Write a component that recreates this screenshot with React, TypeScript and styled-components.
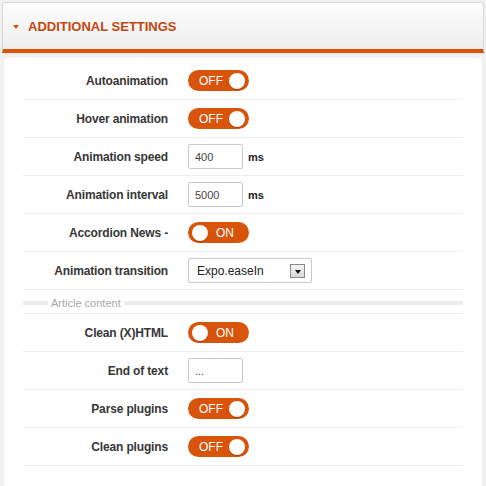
import React from "react";
import styled, { createGlobalStyle } from "styled-components";

const Global = createGlobalStyle`
  html, body { margin: 0; padding: 0; }
  body {
    background: #f1f1f1;
    font-family: "Liberation Sans", Arial, sans-serif;
    color: #333;
  }
`;

const ORANGE = "#d9540b";

const Page = styled.div`
  width: 486px;
  height: 486px;
  padding: 2px 2px 0 2px;
  box-sizing: border-box;
  display: flex;
  flex-direction: column;
  overflow: hidden;
`;

const Header = styled.div`
  height: 46px;
  border: 1px solid #d8d8d8;
  border-bottom: 4px solid ${ORANGE};
  border-radius: 3px 3px 0 0;
  background: linear-gradient(#fdfdfd, #eeeeee);
  display: flex;
  align-items: center;
  padding-left: 10px;
  gap: 9px;
  box-shadow: 0 1px 1px rgba(0, 0, 0, 0.06);
`;

const Caret = styled.span`
  width: 0;
  height: 0;
  border-left: 3.5px solid transparent;
  border-right: 3.5px solid transparent;
  border-top: 4px solid ${ORANGE};
  margin-top: 1px;
`;

const Title = styled.h3`
  margin: 0;
  font-size: 13px;
  font-weight: bold;
  color: #c4470f;
  text-transform: uppercase;
  letter-spacing: 0;
`;

const Panel = styled.div`
  margin: 5px 2px 0 2px;
  flex: 1;
  background: #fff;
  border-radius: 4px 4px 0 0;
  padding: 4px 19px 0 19px;
`;

const Row = styled.div`
  height: 37px;
  border-bottom: 1px solid #ececec;
  display: grid;
  grid-template-columns: 145px auto;
  column-gap: 20px;
  align-items: center;
`;

const Label = styled.label`
  text-align: right;
  font-size: 12px;
  font-weight: bold;
  color: #363636;
  letter-spacing: -0.15px;
`;

const Control = styled.div`
  display: flex;
  align-items: center;
  gap: 5px;
`;

const Toggle = styled.div<{ $on: boolean }>`
  width: 61px;
  height: 21px;
  border-radius: 11px;
  background: ${ORANGE};
  display: flex;
  align-items: center;
  flex-direction: ${(p) => (p.$on ? "row" : "row-reverse")};
  justify-content: space-between;
  padding: 0 ${(p) => (p.$on ? "15px" : "4px")} 0 ${(p) => (p.$on ? "4px" : "11px")};
  box-sizing: border-box;
`;

const Knob = styled.span`
  width: 16px;
  height: 16px;
  border-radius: 50%;
  background: radial-gradient(circle at 40% 35%, #ffffff 55%, #e2e2e2 100%);
  box-shadow: 0 1px 1px rgba(0, 0, 0, 0.25);
`;

const ToggleText = styled.span`
  color: #fff;
  font-size: 12px;
`;

const Input = styled.div`
  width: 55px;
  height: 25px;
  box-sizing: border-box;
  border: 1px solid #c9c9c9;
  border-radius: 2px;
  font-size: 11px;
  color: #444;
  display: flex;
  align-items: center;
  padding-left: 6px;
`;

const Unit = styled.span`
  font-size: 11px;
  color: #222;
  font-weight: bold;
`;

const Select = styled.div`
  width: 124px;
  height: 25px;
  box-sizing: border-box;
  border: 1px solid #c9c9c9;
  border-radius: 2px;
  display: flex;
  align-items: center;
  justify-content: space-between;
  padding: 0 6px 0 8px;
  font-size: 12px;
  color: #222;
`;

const SelectButton = styled.span`
  width: 15px;
  height: 14px;
  box-sizing: border-box;
  border: 1px solid #888;
  background: linear-gradient(#f4f4f4, #d8d8d8);
  display: flex;
  align-items: center;
  justify-content: center;
  &::after {
    content: "";
    border-left: 3.5px solid transparent;
    border-right: 3.5px solid transparent;
    border-top: 4px solid #111;
    margin-top: 2px;
  }
`;

const Legend = styled.div`
  height: 20px;
  border-bottom: 1px solid #ececec;
  display: flex;
  align-items: center;
  gap: 3px;
  padding-top: 3px;
  box-sizing: content-box;
`;

const LegendBar = styled.span<{ $grow?: boolean }>`
  height: 4px;
  background: #ebebeb;
  width: ${(p) => (p.$grow ? "auto" : "25px")};
  flex: ${(p) => (p.$grow ? 1 : "none")};
`;

const LegendText = styled.span`
  font-size: 11px;
  color: #a8a8a8;
  line-height: 1;
`;

const Switch = ({ on }: { on: boolean }) => (
  <Toggle $on={on}>
    <Knob />
    <ToggleText>{on ? "ON" : "OFF"}</ToggleText>
  </Toggle>
);

export default function App() {
  return (
    <>
      <Global />
      <Page>
        <Header>
          <Caret />
          <Title>Additional Settings</Title>
        </Header>
        <Panel>
          <Row>
            <Label>Autoanimation</Label>
            <Control><Switch on={false} /></Control>
          </Row>
          <Row>
            <Label>Hover animation</Label>
            <Control><Switch on={false} /></Control>
          </Row>
          <Row>
            <Label>Animation speed</Label>
            <Control>
              <Input>400</Input>
              <Unit>ms</Unit>
            </Control>
          </Row>
          <Row>
            <Label>Animation interval</Label>
            <Control>
              <Input>5000</Input>
              <Unit>ms</Unit>
            </Control>
          </Row>
          <Row>
            <Label>Accordion News -</Label>
            <Control><Switch on={true} /></Control>
          </Row>
          <Row>
            <Label>Animation transition</Label>
            <Control>
              <Select>
                <span>Expo.easeIn</span>
                <SelectButton />
              </Select>
            </Control>
          </Row>
          <Legend>
            <LegendBar />
            <LegendText>Article content</LegendText>
            <LegendBar $grow />
          </Legend>
          <Row>
            <Label>Clean (X)HTML</Label>
            <Control><Switch on={true} /></Control>
          </Row>
          <Row>
            <Label>End of text</Label>
            <Control><Input>...</Input></Control>
          </Row>
          <Row>
            <Label>Parse plugins</Label>
            <Control><Switch on={false} /></Control>
          </Row>
          <Row>
            <Label>Clean plugins</Label>
            <Control><Switch on={false} /></Control>
          </Row>
        </Panel>
      </Page>
    </>
  );
}
